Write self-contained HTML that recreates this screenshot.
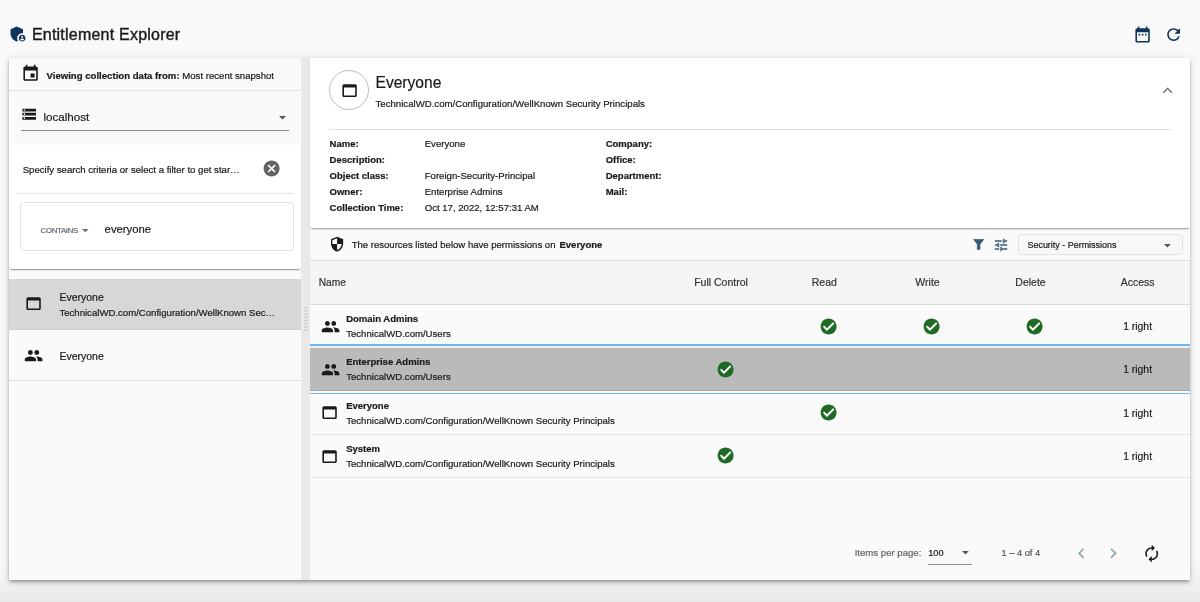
<!DOCTYPE html>
<html lang="en">
<head>
<meta charset="utf-8">
<title>Entitlement Explorer</title>
<style>
html,body{margin:0;padding:0}
body{width:1200px;height:602px;overflow:hidden;position:relative;background:#f9f9f9;font-family:"Liberation Sans", sans-serif;}
.t{position:absolute;white-space:nowrap;line-height:20px;height:20px;-webkit-text-stroke:0.2px currentColor}
.t b{font-weight:700}
.i{position:absolute;display:block;overflow:visible}
.b{position:absolute}
#app{position:absolute;left:0;top:0;width:1200px;height:602px;will-change:transform}
</style>
</head>
<body>
<div id="app">
<div class="b" style="left:0px;top:560px;width:1200.00px;height:42.00px;background:linear-gradient(rgba(233,233,233,0),rgba(233,233,233,.45) 50%,#e9e9e9)"></div>
<div class="b" style="left:8.8px;top:57.8px;width:1181.20px;height:522.00px;background:#fafafa;box-shadow:0 1.6px 3.2px -0.8px rgba(0,0,0,.3),0 3.2px 4px 0 rgba(0,0,0,.14),0 0.8px 8px 0 rgba(0,0,0,.12)"></div>
<div class="b" style="left:8.8px;top:58px;width:292.20px;height:521.80px;background:#fafafa"></div>
<div class="b" style="left:301px;top:58px;width:9.30px;height:521.80px;background:#e9e9e9"></div>
<div class="b" style="left:310.3px;top:58px;width:879.70px;height:521.80px;background:#fafafa"></div>
<svg class="i" style="left:8.1px;top:23.5px" width="20" height="20" viewBox="0 0 24 24"><path fill="#11355a" d="M17 11c.34 0 .67.04 1 .09V6.27L10.5 3 3 6.27v4.91c0 4.54 3.2 8.79 7.5 9.82.55-.13 1.08-.32 1.6-.55-.69-.98-1.1-2.17-1.1-3.45 0-3.31 2.69-6 6-6z"/><path fill="#11355a" d="M17 13c-2.21 0-4 1.79-4 4s1.79 4 4 4 4-1.79 4-4-1.79-4-4-4zm0 1.380c.62 0 1.120.51 1.120 1.120s-.51 1.120-1.120 1.120-1.120-.51-1.120-1.120.5-1.120 1.120-1.120zm0 5.370c-.93 0-1.740-.46-2.240-1.170.05-.72 1.510-1.080 2.240-1.080s2.190.36 2.240 1.080c-.5.710-1.310 1.170-2.240 1.170z"/></svg>
<div class="t" style="left:31.90px;top:25.00px;font-size:16px;color:#1a1a1a;font-weight:400;letter-spacing:0.22px;-webkit-text-stroke:0.4px #1a1a1a;">Entitlement Explorer</div>
<svg class="i" style="left:1132.75px;top:25.20px" width="19.2" height="19.2" viewBox="0 0 24 24"><path fill="#11355a" d="M9 11H7v2h2v-2zm4 0h-2v2h2v-2zm4 0h-2v2h2v-2zm2-7h-1V2h-2v2H8V2H6v2H5c-1.11 0-1.99.9-1.99 2L3 20c0 1.1.89 2 2 2h14c1.1 0 2-.9 2-2V6c0-1.1-.9-2-2-2zm0 16H5V9h14v11z"/></svg>
<svg class="i" style="left:1164.40px;top:25.40px" width="19.2" height="19.2" viewBox="0 0 24 24"><path fill="#11355a" d="M17.65 6.35C16.2 4.9 14.21 4 12 4c-4.42 0-7.99 3.58-7.99 8s3.57 8 7.99 8c3.73 0 6.84-2.55 7.73-6h-2.08c-.82 2.33-3.04 4-5.65 4-3.31 0-6-2.69-6-6s2.69-6 6-6c1.66 0 3.14.69 4.22 1.78L13 11h7V4l-2.35 2.35z"/></svg>
<svg class="i" style="left:21.10px;top:63.90px" width="19.2" height="19.2" viewBox="0 0 24 24"><path fill="#1a1a1a" d="M17 12h-5v5h5v-5zM16 1v2H8V1H6v2H5c-1.11 0-1.99.9-1.99 2L3 19c0 1.1.89 2 2 2h14c1.1 0 2-.9 2-2V5c0-1.1-.9-2-2-2h-1V1h-2zm3 18H5V8h14v11z"/></svg>
<div class="t" style="left:46.50px;top:66.00px;font-size:9.6px;color:#1a1a1a;font-weight:400;"><b>Viewing collection data from:</b> Most recent snapshot</div>
<div class="b" style="left:8.8px;top:90px;width:292.20px;height:1.00px;background:#e2e2e2"></div>
<svg class="i" style="left:20.60px;top:105.60px" width="16.4" height="16.4" viewBox="0 0 24 24"><path fill="#1a1a1a" d="M2 20h20v-4H2v4zm2-3h2v2H4v-2zM2 4v4h20V4H2zm4 3H4V5h2v2zm-4 7h20v-4H2v4zm2-3h2v2H4v-2z"/></svg>
<div class="t" style="left:43.40px;top:107.00px;font-size:11.65px;color:#1a1a1a;font-weight:400;">localhost</div>
<svg class="i" style="left:278.8px;top:116px" width="7" height="3.5" viewBox="0 0 10 5"><path fill="#555" d="M0 0l5 5 5-5z"/></svg>
<div class="b" style="left:21px;top:130.2px;width:267.60px;height:0.80px;background:#8a8a8a"></div>
<div class="b" style="left:8.8px;top:145px;width:292.40px;height:123.90px;background:#fff;border-radius:3px;box-shadow:0 2px 1.6px -1px rgba(0,0,0,.42),0 1px 1px -1px rgba(0,0,0,.25)"></div>
<div class="t" style="left:22.70px;top:160.00px;font-size:9.6px;color:#1a1a1a;font-weight:400;">Specify search criteria or select a filter to get star…</div>
<svg class="i" style="left:261.80px;top:159.40px" width="19.2" height="19.2" viewBox="0 0 24 24"><path fill="#636363" d="M12 2C6.47 2 2 6.47 2 12s4.47 10 10 10 10-4.47 10-10S17.53 2 12 2zm5 13.59L15.59 17 12 13.41 8.41 17 7 15.59 10.59 12 7 8.41 8.41 7 12 10.59 15.59 7 17 8.41 13.41 12 17 15.59z"/></svg>
<div class="b" style="left:16px;top:193px;width:278.00px;height:1.00px;background:#e6e6e6"></div>
<div class="b" style="left:20px;top:202px;width:273.70px;height:48.70px;border:1px solid #e2e2e2;border-radius:3.5px;box-sizing:border-box;background:#fff"></div>
<div class="t" style="left:40.60px;top:221.00px;font-size:7.8px;color:#5e6b78;font-weight:400;letter-spacing:-0.3px;">CONTAINS</div>
<svg class="i" style="left:82px;top:228.8px" width="6.6" height="3.3" viewBox="0 0 10 5"><path fill="#5d6f80" d="M0 0l5 5 5-5z"/></svg>
<div class="t" style="left:104.60px;top:219.00px;font-size:11.3px;color:#1a1a1a;font-weight:400;">everyone</div>
<div class="b" style="left:8.8px;top:278.6px;width:292.20px;height:50.80px;background:#d7d7d7"></div>
<div class="b" style="left:8.8px;top:329.2px;width:292.20px;height:0.80px;background:#d0d0d0"></div>
<svg class="i" style="left:24.20px;top:294.30px" width="19.2" height="19.2" viewBox="0 0 24 24"><path fill="#1a1a1a" d="M19 4H5c-1.11 0-2 .9-2 2v12c0 1.1.89 2 2 2h14c1.1 0 2-.9 2-2V6c0-1.1-.89-2-2-2zm0 14H5V8h14v10z"/></svg>
<div class="t" style="left:59.40px;top:287.00px;font-size:10.5px;color:#1a1a1a;font-weight:400;">Everyone</div>
<div class="t" style="left:59.40px;top:303.00px;font-size:9.6px;color:#1a1a1a;font-weight:400;">TechnicalWD.com/Configuration/WellKnown Sec…</div>
<svg class="i" style="left:24.20px;top:346.40px" width="19.2" height="19.2" viewBox="0 0 24 24"><path fill="#1a1a1a" d="M16 11c1.66 0 2.99-1.34 2.99-3S17.66 5 16 5c-1.66 0-3 1.34-3 3s1.34 3 3 3zm-8 0c1.66 0 2.99-1.34 2.99-3S9.66 5 8 5C6.34 5 5 6.34 5 8s1.34 3 3 3zm0 2c-2.33 0-7 1.17-7 3.5V19h14v-2.5c0-2.33-4.67-3.5-7-3.5zm8 0c-.29 0-.62.02-.97.05 1.16.84 1.97 1.97 1.97 3.45V19h6v-2.5c0-2.33-4.67-3.5-7-3.5z"/></svg>
<div class="t" style="left:59.40px;top:346.00px;font-size:10.5px;color:#1a1a1a;font-weight:400;">Everyone</div>
<div class="b" style="left:8.8px;top:380.2px;width:292.20px;height:0.80px;background:#e2e2e2"></div>
<div class="b" style="left:310.3px;top:57.8px;width:879.70px;height:170.20px;background:#fff;border-radius:3px 3px 2px 2px;box-shadow:0 2px 2px -1px rgba(0,0,0,.4),0 1px 1px -1px rgba(0,0,0,.2)"></div>
<div class="b" style="left:329.2px;top:70.2px;width:40.00px;height:40.00px;border:1px solid #bdbdbd;border-radius:50%;box-sizing:border-box"></div>
<svg class="i" style="left:339.60px;top:80.60px" width="19.2" height="19.2" viewBox="0 0 24 24"><path fill="#1a1a1a" d="M19 4H5c-1.11 0-2 .9-2 2v12c0 1.1.89 2 2 2h14c1.1 0 2-.9 2-2V6c0-1.1-.89-2-2-2zm0 14H5V8h14v10z"/></svg>
<div class="t" style="left:375.50px;top:73.00px;font-size:15.6px;color:#1a1a1a;font-weight:400;">Everyone</div>
<div class="t" style="left:375.50px;top:94.00px;font-size:9.63px;color:#1a1a1a;font-weight:400;">TechnicalWD.com/Configuration/WellKnown Security Principals</div>
<svg class="i" style="left:1160px;top:84px" width="16" height="12" viewBox="0 0 16 12"><path fill="none" stroke="#616161" stroke-width="1.25" d="M3.300 8.700L7.600 4.400l4.300 4.300"/></svg>
<div class="b" style="left:329.2px;top:129.2px;width:841.80px;height:0.80px;background:#e2e2e2"></div>
<div class="t" style="left:329.60px;top:134.00px;font-size:9.5px;color:#1a1a1a;font-weight:700;">Name:</div>
<div class="t" style="left:424.70px;top:134.00px;font-size:9.6px;color:#1a1a1a;font-weight:400;">Everyone</div>
<div class="t" style="left:605.70px;top:134.00px;font-size:9.5px;color:#1a1a1a;font-weight:700;">Company:</div>
<div class="t" style="left:329.60px;top:150.00px;font-size:9.5px;color:#1a1a1a;font-weight:700;">Description:</div>
<div class="t" style="left:605.70px;top:150.00px;font-size:9.5px;color:#1a1a1a;font-weight:700;">Office:</div>
<div class="t" style="left:329.60px;top:166.00px;font-size:9.5px;color:#1a1a1a;font-weight:700;">Object class:</div>
<div class="t" style="left:424.70px;top:166.00px;font-size:9.6px;color:#1a1a1a;font-weight:400;">Foreign-Security-Principal</div>
<div class="t" style="left:605.70px;top:166.00px;font-size:9.5px;color:#1a1a1a;font-weight:700;">Department:</div>
<div class="t" style="left:329.60px;top:182.00px;font-size:9.5px;color:#1a1a1a;font-weight:700;">Owner:</div>
<div class="t" style="left:424.70px;top:182.00px;font-size:9.6px;color:#1a1a1a;font-weight:400;">Enterprise Admins</div>
<div class="t" style="left:605.70px;top:182.00px;font-size:9.5px;color:#1a1a1a;font-weight:700;">Mail:</div>
<div class="t" style="left:329.60px;top:198.00px;font-size:9.5px;color:#1a1a1a;font-weight:700;">Collection Time:</div>
<div class="t" style="left:424.70px;top:198.00px;font-size:9.6px;color:#1a1a1a;font-weight:400;">Oct 17, 2022, 12:57:31 AM</div>
<svg class="i" style="left:329.30px;top:236.10px" width="16.2" height="16.2" viewBox="0 0 24 24"><path fill="#1a1a1a" d="M12 1L3 5v6c0 5.55 3.84 10.74 9 12 5.16-1.26 9-6.45 9-12V5l-9-4zm0 10.99h7c-.53 4.12-3.28 7.79-7 8.94V12H5V6.3l7-3.11v8.8z"/></svg>
<div class="t" style="left:351.70px;top:235.00px;font-size:9.55px;color:#1a1a1a;font-weight:400;">The resources listed below have permissions on <b style="margin-left:1.3px">Everyone</b></div>
<svg class="i" style="left:970px;top:236px" width="18" height="16" viewBox="0 0 18 16"><path fill="#375b76" stroke="#375b76" stroke-width="0.7" stroke-linejoin="round" d="M3.600 3.500h10.100L10 8.200v5.200H7.300V8.200z"/></svg>
<svg class="i" style="left:992.75px;top:236.9px" width="16" height="16" viewBox="0 0 24 24"><path fill="#486a85" stroke="#486a85" stroke-width="0.5" d="M3 17v2h6v-2H3zM3 5v2h10V5H3zm10 16v-2h8v-2h-8v-2h-2v6h2zM7 9v2H3v2h4v2h2V9H7zm14 4v-2H11v2h10zm-6-4h2V7h4V5h-4V3h-2v6z"/></svg>
<div class="b" style="left:1018.3px;top:234px;width:164.40px;height:21.20px;border:1px solid #e2e2e2;border-radius:3.5px;box-sizing:border-box;background:#f8f8f8"></div>
<div class="t" style="left:1027.50px;top:235.00px;font-size:8.95px;color:#1a1a1a;font-weight:400;">Security - Permissions</div>
<svg class="i" style="left:1163.5px;top:243.6px" width="6.8" height="3.4" viewBox="0 0 10 5"><path fill="#555" d="M0 0l5 5 5-5z"/></svg>
<div class="b" style="left:310.3px;top:260.4px;width:879.70px;height:0.80px;background:#dedede"></div>
<div class="b" style="left:310.3px;top:261.2px;width:879.70px;height:42.80px;background:#f5f5f5"></div>
<div class="b" style="left:310.3px;top:304px;width:879.70px;height:0.80px;background:#dcdcdc"></div>
<div class="t" style="left:318.70px;top:273.00px;font-size:10.2px;color:#333;font-weight:400;">Name</div>
<div class="t" style="left:571.00px;width:300px;text-align:center;top:272.00px;font-size:10.5px;color:#333;font-weight:400;">Full Control</div>
<div class="t" style="left:674.30px;width:300px;text-align:center;top:272.00px;font-size:10.5px;color:#333;font-weight:400;">Read</div>
<div class="t" style="left:777.50px;width:300px;text-align:center;top:272.00px;font-size:10.5px;color:#333;font-weight:400;">Write</div>
<div class="t" style="left:880.50px;width:300px;text-align:center;top:272.00px;font-size:10.5px;color:#333;font-weight:400;">Delete</div>
<div class="t" style="left:987.70px;width:300px;text-align:center;top:272.00px;font-size:10.5px;color:#333;font-weight:400;">Access</div>
<div class="b" style="left:310.3px;top:347.09999999999997px;width:879.70px;height:0.80px;background:#e2e2e2"></div>
<svg class="i" style="left:320.70px;top:316.60px" width="19.2" height="19.2" viewBox="0 0 24 24"><path fill="#1a1a1a" d="M16 11c1.66 0 2.99-1.34 2.99-3S17.66 5 16 5c-1.66 0-3 1.34-3 3s1.34 3 3 3zm-8 0c1.66 0 2.99-1.34 2.99-3S9.66 5 8 5C6.34 5 5 6.34 5 8s1.34 3 3 3zm0 2c-2.33 0-7 1.17-7 3.5V19h14v-2.5c0-2.33-4.67-3.5-7-3.5zm8 0c-.29 0-.62.02-.97.05 1.16.84 1.97 1.97 1.97 3.45V19h6v-2.5c0-2.33-4.67-3.5-7-3.5z"/></svg>
<div class="t" style="left:346.20px;top:309.00px;font-size:9.5px;color:#1a1a1a;font-weight:700;">Domain Admins</div>
<div class="t" style="left:346.20px;top:324.00px;font-size:9.6px;color:#1a1a1a;font-weight:400;">TechnicalWD.com/Users</div>
<svg class="i" style="left:819.10px;top:316.50px" width="19.2" height="19.2" viewBox="0 0 24 24"><path fill="#1f6b23" d="M12 2C6.48 2 2 6.48 2 12s4.48 10 10 10 10-4.48 10-10S17.52 2 12 2zm-2 15l-5-5 1.41-1.41L10 14.17l7.59-7.59L19 8l-9 9z"/><path fill="none" stroke="#fff" stroke-width="2" d="M6.300 12.300L10 16l8.300-8.400"/></svg>
<svg class="i" style="left:922.00px;top:316.50px" width="19.2" height="19.2" viewBox="0 0 24 24"><path fill="#1f6b23" d="M12 2C6.48 2 2 6.48 2 12s4.48 10 10 10 10-4.48 10-10S17.52 2 12 2zm-2 15l-5-5 1.41-1.41L10 14.17l7.59-7.59L19 8l-9 9z"/><path fill="none" stroke="#fff" stroke-width="2" d="M6.300 12.300L10 16l8.300-8.400"/></svg>
<svg class="i" style="left:1025.00px;top:316.50px" width="19.2" height="19.2" viewBox="0 0 24 24"><path fill="#1f6b23" d="M12 2C6.48 2 2 6.48 2 12s4.48 10 10 10 10-4.48 10-10S17.52 2 12 2zm-2 15l-5-5 1.41-1.41L10 14.17l7.59-7.59L19 8l-9 9z"/><path fill="none" stroke="#fff" stroke-width="2" d="M6.300 12.300L10 16l8.300-8.400"/></svg>
<div class="t" style="left:987.60px;width:300px;text-align:center;top:317.00px;font-size:10.4px;color:#1a1a1a;font-weight:400;">1 right</div>
<div class="b" style="left:310.3px;top:344.4px;width:879.70px;height:1.90px;background:#70b8f4"></div>
<div class="b" style="left:310.3px;top:346.4px;width:879.70px;height:1.20px;background:#efefef"></div>
<div class="b" style="left:310.3px;top:347.6px;width:879.70px;height:42.60px;background:#bababa"></div>
<div class="b" style="left:310.3px;top:390.2px;width:879.70px;height:0.80px;background:#a6a6a6"></div>
<div class="b" style="left:310.3px;top:392.6px;width:879.70px;height:1.90px;background:#70b8f4"></div>
<svg class="i" style="left:320.70px;top:359.90px" width="19.2" height="19.2" viewBox="0 0 24 24"><path fill="#1a1a1a" d="M16 11c1.66 0 2.99-1.34 2.99-3S17.66 5 16 5c-1.66 0-3 1.34-3 3s1.34 3 3 3zm-8 0c1.66 0 2.99-1.34 2.99-3S9.66 5 8 5C6.34 5 5 6.34 5 8s1.34 3 3 3zm0 2c-2.33 0-7 1.17-7 3.5V19h14v-2.5c0-2.33-4.67-3.5-7-3.5zm8 0c-.29 0-.62.02-.97.05 1.16.84 1.97 1.97 1.97 3.45V19h6v-2.5c0-2.33-4.67-3.5-7-3.5z"/></svg>
<div class="t" style="left:346.20px;top:352.00px;font-size:9.5px;color:#1a1a1a;font-weight:700;">Enterprise Admins</div>
<div class="t" style="left:346.20px;top:367.00px;font-size:9.6px;color:#1a1a1a;font-weight:400;">TechnicalWD.com/Users</div>
<svg class="i" style="left:715.80px;top:359.80px" width="19.2" height="19.2" viewBox="0 0 24 24"><path fill="#1f6b23" d="M12 2C6.48 2 2 6.48 2 12s4.48 10 10 10 10-4.48 10-10S17.52 2 12 2zm-2 15l-5-5 1.41-1.41L10 14.17l7.59-7.59L19 8l-9 9z"/><path fill="none" stroke="#fff" stroke-width="2" d="M6.300 12.300L10 16l8.300-8.400"/></svg>
<div class="t" style="left:987.60px;width:300px;text-align:center;top:360.00px;font-size:10.4px;color:#1a1a1a;font-weight:400;">1 right</div>
<div class="b" style="left:310.3px;top:433.69999999999993px;width:879.70px;height:0.80px;background:#e2e2e2"></div>
<svg class="i" style="left:320.40px;top:403.20px" width="19.2" height="19.2" viewBox="0 0 24 24"><path fill="#1a1a1a" d="M19 4H5c-1.11 0-2 .9-2 2v12c0 1.1.89 2 2 2h14c1.1 0 2-.9 2-2V6c0-1.1-.89-2-2-2zm0 14H5V8h14v10z"/></svg>
<div class="t" style="left:346.20px;top:396.00px;font-size:9.5px;color:#1a1a1a;font-weight:700;">Everyone</div>
<div class="t" style="left:346.20px;top:411.00px;font-size:9.6px;color:#1a1a1a;font-weight:400;">TechnicalWD.com/Configuration/WellKnown Security Principals</div>
<svg class="i" style="left:819.10px;top:403.10px" width="19.2" height="19.2" viewBox="0 0 24 24"><path fill="#1f6b23" d="M12 2C6.48 2 2 6.48 2 12s4.48 10 10 10 10-4.48 10-10S17.52 2 12 2zm-2 15l-5-5 1.41-1.41L10 14.17l7.59-7.59L19 8l-9 9z"/><path fill="none" stroke="#fff" stroke-width="2" d="M6.300 12.300L10 16l8.300-8.400"/></svg>
<div class="t" style="left:987.60px;width:300px;text-align:center;top:404.00px;font-size:10.4px;color:#1a1a1a;font-weight:400;">1 right</div>
<div class="b" style="left:310.3px;top:476.99999999999994px;width:879.70px;height:0.80px;background:#e2e2e2"></div>
<svg class="i" style="left:320.40px;top:446.50px" width="19.2" height="19.2" viewBox="0 0 24 24"><path fill="#1a1a1a" d="M19 4H5c-1.11 0-2 .9-2 2v12c0 1.1.89 2 2 2h14c1.1 0 2-.9 2-2V6c0-1.1-.89-2-2-2zm0 14H5V8h14v10z"/></svg>
<div class="t" style="left:346.20px;top:439.00px;font-size:9.5px;color:#1a1a1a;font-weight:700;">System</div>
<div class="t" style="left:346.20px;top:454.00px;font-size:9.6px;color:#1a1a1a;font-weight:400;">TechnicalWD.com/Configuration/WellKnown Security Principals</div>
<svg class="i" style="left:715.80px;top:446.40px" width="19.2" height="19.2" viewBox="0 0 24 24"><path fill="#1f6b23" d="M12 2C6.48 2 2 6.48 2 12s4.48 10 10 10 10-4.48 10-10S17.52 2 12 2zm-2 15l-5-5 1.41-1.41L10 14.17l7.59-7.59L19 8l-9 9z"/><path fill="none" stroke="#fff" stroke-width="2" d="M6.300 12.300L10 16l8.300-8.400"/></svg>
<div class="t" style="left:987.60px;width:300px;text-align:center;top:447.00px;font-size:10.4px;color:#1a1a1a;font-weight:400;">1 right</div>
<div class="t" style="left:854.70px;top:543.00px;font-size:9.6px;color:#666;font-weight:400;">Items per page:</div>
<div class="t" style="left:928.20px;top:543.00px;font-size:9.2px;color:#1a1a1a;font-weight:400;">100</div>
<svg class="i" style="left:962px;top:551.2px" width="6.8" height="3.4" viewBox="0 0 10 5"><path fill="#555" d="M0 0l5 5 5-5z"/></svg>
<div class="b" style="left:928px;top:564.3px;width:44.20px;height:0.80px;background:#8a8a8a"></div>
<div class="t" style="left:1001.40px;top:543.00px;font-size:9.3px;color:#555;font-weight:400;">1 – 4 of 4</div>
<svg class="i" style="left:1071.30px;top:543.00px" width="20.6" height="20.6" viewBox="0 0 24 24"><path fill="#8fa7b7" d="M15.41 7.41L14 6l-6 6 6 6 1.41-1.41L10.83 12z"/></svg>
<svg class="i" style="left:1102.90px;top:543.10px" width="20.6" height="20.6" viewBox="0 0 24 24"><path fill="#8fa7b7" d="M10 6L8.59 7.41 13.17 12l-4.58 4.59L10 18l6-6z"/></svg>
<svg class="i" style="left:1141.80px;top:543.90px" width="19.4" height="19.4" viewBox="0 0 24 24"><path fill="#1a1a1a" d="M12 6v3l4-4-4-4v3c-4.42 0-8 3.58-8 8 0 1.57.46 3.03 1.24 4.26L6.7 14.8c-.45-.83-.7-1.79-.7-2.8 0-3.31 2.69-6 6-6zm6.76 1.74L17.3 9.2c.44.84.7 1.79.7 2.8 0 3.31-2.69 6-6 6v-3l-4 4 4 4v-3c4.42 0 8-3.58 8-8 0-1.57-.46-3.03-1.24-4.26z"/></svg>
<svg class="i" style="left:303.7px;top:307px" width="5" height="26" viewBox="0 0 5 26"><rect x="0.0" y="0.0" width="1.4" height="1.4" fill="#c4c4c4"/><rect x="2.4" y="0.0" width="1.4" height="1.4" fill="#c4c4c4"/><rect x="0.0" y="3.2" width="1.4" height="1.4" fill="#c4c4c4"/><rect x="2.4" y="3.2" width="1.4" height="1.4" fill="#c4c4c4"/><rect x="0.0" y="6.4" width="1.4" height="1.4" fill="#c4c4c4"/><rect x="2.4" y="6.4" width="1.4" height="1.4" fill="#c4c4c4"/><rect x="0.0" y="9.6" width="1.4" height="1.4" fill="#c4c4c4"/><rect x="2.4" y="9.6" width="1.4" height="1.4" fill="#c4c4c4"/><rect x="0.0" y="12.8" width="1.4" height="1.4" fill="#c4c4c4"/><rect x="2.4" y="12.8" width="1.4" height="1.4" fill="#c4c4c4"/><rect x="0.0" y="16.0" width="1.4" height="1.4" fill="#c4c4c4"/><rect x="2.4" y="16.0" width="1.4" height="1.4" fill="#c4c4c4"/><rect x="0.0" y="19.2" width="1.4" height="1.4" fill="#c4c4c4"/><rect x="2.4" y="19.2" width="1.4" height="1.4" fill="#c4c4c4"/><rect x="0.0" y="22.4" width="1.4" height="1.4" fill="#c4c4c4"/><rect x="2.4" y="22.4" width="1.4" height="1.4" fill="#c4c4c4"/></svg>
</div>
</body>
</html>
